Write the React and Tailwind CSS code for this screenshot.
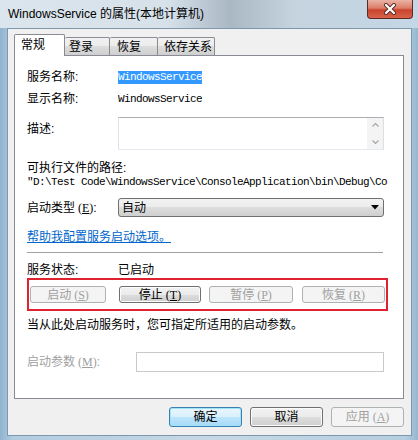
const SANS = "font-['Liberation_Sans','Noto_Sans_CJK_SC',sans-serif]";
const MONO = "font-['Liberation_Mono','Noto_Sans_CJK_SC',monospace] text-[11px] tracking-[-0.6px]";

function Btn({ children, w, disabled, primary, className = "" }) {
  let look;
  if (disabled) {
    look = "border-[#adb2b5] bg-[#f4f4f4] text-[#a0a0a0]";
  } else if (primary) {
    look =
      "border-[#3c7fb1] bg-[linear-gradient(#eaf6fd,#d9f0fc_50%,#bee6fd_50%,#a7d9f5)] text-black shadow-[inset_0_0_0_1px_#9fe3fa]";
  } else {
    look =
      "border-[#707070] bg-[linear-gradient(#f2f2f2,#ebebeb_50%,#dddddd_50%,#cfcfcf)] text-black shadow-[inset_0_0_0_1px_#fcfcfc]";
  }
  return (
    <div
      className={`${w} h-full flex items-center justify-center rounded-[3px] border ${look} ${className} text-[12px] leading-[14px]`}
    >
      {children}
    </div>
  );
}

function Key({ k }) {
  return (
    <span className="font-['Liberation_Serif',serif] ml-[3px]">
      (<span className="underline">{k}</span>)
    </span>
  );
}

export default function App() {
  return (
    <div
      className={`w-[418px] h-[440px] overflow-hidden flex flex-col ${SANS} text-[12px] text-black bg-[linear-gradient(to_right,#8fb3cf,#b2cce0_3%,#c6d8e5_50%,#b5cee0_97%,#93b8d2)]`}
    >
      {/* Title bar */}
      <div className="h-[28px] flex items-start justify-between bg-[linear-gradient(to_right,#dbe5ed,#d6e1ea_40%,#aab8c4_55%,#c5d3de_70%,#c3d7e6)]">
        <div className="pl-[8px] pt-[6px] leading-[16px] text-[12px] text-black">
          WindowsService 的属性(本地计算机)
        </div>
        <div className="mr-[5px] w-[46px] h-[19px] rounded-b-[4px] border border-t-0 border-[#5e2a22] bg-[linear-gradient(#eab3a6,#dc7d68_45%,#c9442d_55%,#d9624a)] flex items-center justify-center">
          <svg width="14" height="12" viewBox="0 0 14 12">
            <path d="M3 2 L11 10 M11 2 L3 10" stroke="#5a2a24" strokeWidth="4" strokeLinecap="round" />
            <path d="M3 2 L11 10 M11 2 L3 10" stroke="#ffffff" strokeWidth="2.2" strokeLinecap="round" />
          </svg>
        </div>
      </div>

      {/* Client area */}
      <div className="ml-[7px] mr-[6px] h-[408px] border border-[#7f97ab] bg-[#f0f0f0] flex flex-col">
        {/* Tabs */}
        <div className="ml-[6px] mt-[5px] h-[21px] flex items-end relative z-10">
          <div className="w-[51px] h-[22px] -mb-px bg-white border border-b-0 border-[#898c95] rounded-t-[2px] pl-[6px] pt-[3px] leading-[14px]">
            常规
          </div>
          <div className="w-[45px] h-[18px] border border-l-0 border-b-0 border-[#898c95] rounded-t-[2px] bg-[linear-gradient(#f2f2f2,#ebebeb_50%,#dddddd_50%,#cfcfcf)] pl-[4px] pt-[2px] leading-[14px]">
            登录
          </div>
          <div className="w-[48px] h-[18px] border border-l-0 border-b-0 border-[#898c95] rounded-t-[2px] bg-[linear-gradient(#f2f2f2,#ebebeb_50%,#dddddd_50%,#cfcfcf)] pl-[7px] pt-[2px] leading-[14px]">
            恢复
          </div>
          <div className="w-[57px] h-[18px] border border-l-0 border-b-0 border-[#898c95] rounded-t-[2px] bg-[linear-gradient(#f2f2f2,#ebebeb_50%,#dddddd_50%,#cfcfcf)] pl-[6px] pt-[2px] leading-[14px]">
            依存关系
          </div>
        </div>

        {/* Panel */}
        <div className="ml-[6px] w-[390px] h-[344px] border border-[#898c95] bg-white pl-[12px] pt-[14px] flex flex-col">
          <div className="h-[14px] flex items-center">
            <div className="w-[91px] leading-[14px]">服务名称:</div>
            <span className={`${MONO} bg-[#3399ff] text-white h-[13px] leading-[13px] inline-block`}>
              WindowsService
            </span>
          </div>
          <div className="mt-[8px] h-[14px] flex items-center">
            <div className="w-[91px] leading-[14px]">显示名称:</div>
            <span className={`${MONO} leading-[14px]`}>WindowsService</span>
          </div>
          <div className="mt-[11px] h-[33px] flex">
            <div className="w-[91px] pt-[5px] leading-[14px]">描述:</div>
            <div className="w-[266px] h-full border border-[#abadb3] border-b-[#e3e9ef] border-l-[#e2e3ea] border-r-[#dbdfe6] bg-white flex justify-end">
              <div className="w-[16px] h-full bg-[#f4f4f4] flex flex-col items-center justify-between py-[5px]">
                <svg width="7" height="4" viewBox="0 0 7 4">
                  <path d="M0.5 3.5 L3.5 0.5 L6.5 3.5" fill="none" stroke="#a8a8a8" strokeWidth="1.2" />
                </svg>
                <svg width="7" height="4" viewBox="0 0 7 4">
                  <path d="M0.5 0.5 L3.5 3.5 L6.5 0.5" fill="none" stroke="#a8a8a8" strokeWidth="1.2" />
                </svg>
              </div>
            </div>
          </div>
          <div className="mt-[11px] h-[14px] leading-[14px]">可执行文件的路径:</div>
          <div className={`h-[14px] w-[362px] whitespace-nowrap ${MONO} leading-[14px]`}>
            "D:\Test Code\WindowsService\ConsoleApplication\bin\Debug\Co
          </div>
          <div className="mt-[9px] h-[19px] flex items-center">
            <div className="w-[91px] leading-[14px]">
              启动类型<Key k="E" />:
            </div>
            <div className="w-[266px] h-full rounded-[3px] border border-[#707070] bg-[linear-gradient(#f2f2f2,#ebebeb_50%,#dddddd_50%,#cfcfcf)] flex items-center justify-between pl-[3px] pr-[4px] leading-[14px]">
              <span>自动</span>
              <svg width="8" height="5" viewBox="0 0 8 5">
                <path d="M0 0 L8 0 L4 4.5 Z" fill="#000" />
              </svg>
            </div>
          </div>
          <div className="mt-[13px] h-[14px] leading-[14px] text-[#0066cc] underline">帮助我配置服务启动选项。</div>
          <div className="mt-[8px] w-[356px] h-px bg-[#a0a0a0]" />
          <div className="mt-[10px] h-[14px] flex items-center">
            <div className="w-[91px] leading-[14px]">服务状态:</div>
            <span className="leading-[14px]">已启动</span>
          </div>
          <div className="mt-[1px] w-[361px] h-[33px] border-2 border-[#e0212e] pl-[1px] py-[6px] flex">
            <Btn w="w-[76px]" disabled>
              启动<Key k="S" />
            </Btn>
            <Btn w="w-[82px]" className="ml-[13px]">
              停止<Key k="T" />
            </Btn>
            <Btn w="w-[84px]" className="ml-[8px]" disabled>
              暂停<Key k="P" />
            </Btn>
            <Btn w="w-[83px]" className="ml-[9px]" disabled>
              恢复<Key k="R" />
            </Btn>
          </div>
          <div className="mt-[7px] h-[14px] leading-[14px]">当从此处启动服务时，您可指定所适用的启动参数。</div>
          <div className="mt-[20px] h-[20px] flex items-center">
            <div className="w-[109px] leading-[14px] text-[#a0a0a0]">
              启动参数<Key k="M" />:
            </div>
            <div className="w-[248px] h-full border border-[#c9c9c9] bg-white" />
          </div>
        </div>

        {/* Bottom buttons */}
        <div className="mt-[8px] ml-[6px] w-[390px] h-[20px] flex justify-end">
          <Btn w="w-[73px]" primary>
            确定
          </Btn>
          <Btn w="w-[73px]" className="ml-[8px]">
            取消
          </Btn>
          <Btn w="w-[73px]" className="ml-[8px]" disabled>
            应用<Key k="A" />
          </Btn>
        </div>
      </div>
    </div>
  );
}
